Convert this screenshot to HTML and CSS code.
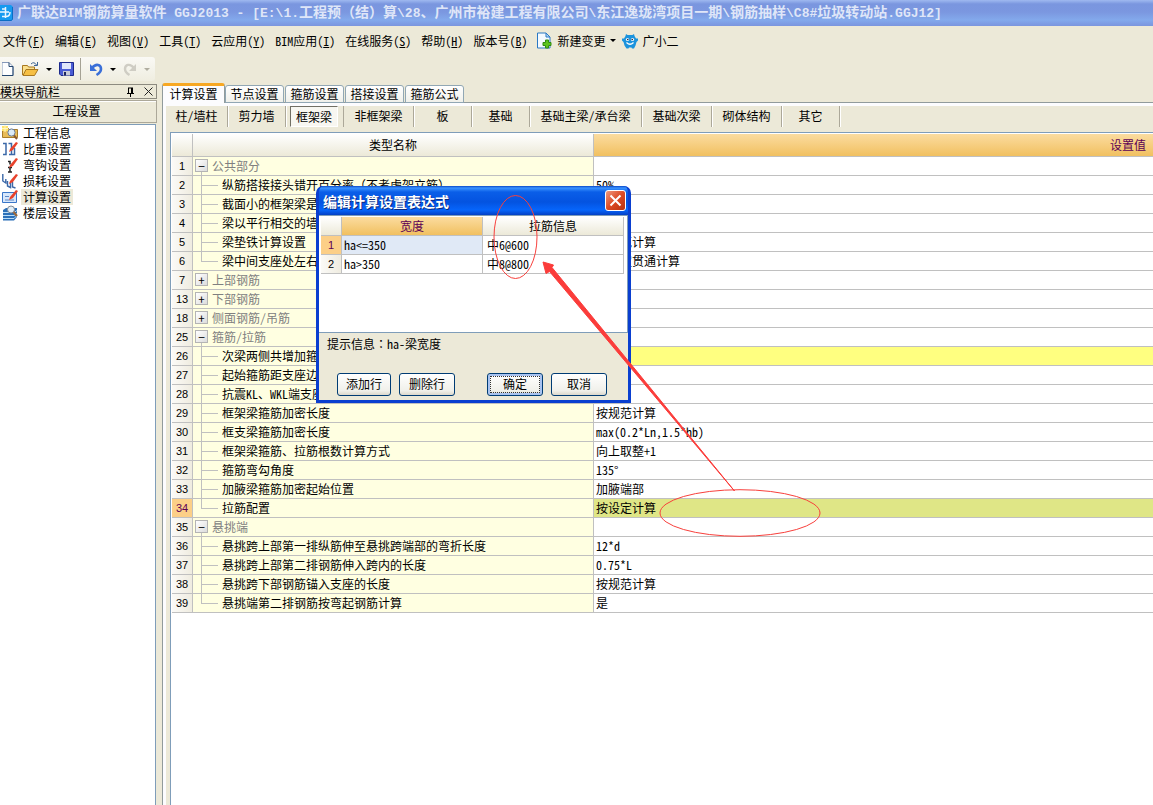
FILE: index.html
```html
<!DOCTYPE html>
<html lang="zh-CN">
<head>
<meta charset="utf-8">
<title>广联达BIM钢筋算量软件 GGJ2013</title>
<link rel="stylesheet" href="styles.css">
</head>
<body>
<div class="app">
  <header class="titlebar">
    <svg class="app-logo" width="14" height="18" viewBox="0 0 14 18"><path d="M0 1h11l2 2v12l-2 2H0z" fill="#169af0"/><path d="M0 16.500h11.500l1-1.500V3" fill="none" stroke="#0a6ec4"/><path d="M0 8h9M5.500 3v11M2 5h3M2 12.500h4c2.500 0 4-1.500 4-4.500" fill="none" stroke="#e8f6ff" stroke-width="1.500"/></svg>
    <h1>广联达<span>BIM</span>钢筋算量软件<span> GGJ2013 - [E:\1.</span>工程预（结）算<span>\28</span>、广州市裕建工程有限公司<span>\</span>东江逸珑湾项目一期<span>\</span>钢筋抽样<span>\C8#</span>垃圾转动站<span>.GGJ12]</span></h1>
  </header>

  <nav class="menubar">
    <button>文件(<u>F</u>)</button>
    <button>编辑(<u>E</u>)</button>
    <button>视图(<u>V</u>)</button>
    <button>工具(<u>T</u>)</button>
    <button>云应用(<u>Y</u>)</button>
    <button>BIM应用(<u>I</u>)</button>
    <button>在线服务(<u>S</u>)</button>
    <button>帮助(<u>H</u>)</button>
    <button>版本号(<u>B</u>)</button>
    <button class="with-icon">
      <svg width="15" height="17" viewBox="0 0 15 17"><path d="M.5 1h8.500l4 4v11H.5z" fill="#f4faff" stroke="#2a78c4"/><path d="M9 1v4h4z" fill="#b8daf6" stroke="#2a78c4"/><path d="M8.500 8h3v2.500H14v3h-2.500V16h-3v-2.500H6v-3h2.500z" fill="#5cc41c" stroke="#2f8a10"/></svg>
      新建变更 <i class="caret"></i>
    </button>
    <button class="with-icon helper">
      <svg width="16" height="16" viewBox="0 0 16 16"><path d="M3.500 3L4 1l1.500 1h5L12 1l.5 2 1.500 2.500h2v2l-1.500 1.500-1 3.500-1.500 3h-2l-.5-1H7l-.5 1h-2l-2-3-1-3.500L0 7.500v-2h2z" fill="#1b93dd"/><circle cx="5.500" cy="6.500" r="1.600" fill="#fff"/><circle cx="10.500" cy="6.500" r="1.600" fill="#fff"/><circle cx="5.800" cy="6.500" r=".8" fill="#124"/><circle cx="10.200" cy="6.500" r=".8" fill="#124"/><path d="M4.500 9.500q3.500 3.500 7 0" fill="none" stroke="#fff" stroke-width="1.200"/></svg>
      广小二
    </button>
  </nav>

  <div class="toolbar">
    <button aria-label="新建"><svg width="12" height="16" viewBox="0 0 12 16"><path d="M0 1.500h7l4 4v9H0z" fill="#fdfeff" stroke="#8598b8"/><path d="M7 1.500v4h4v9H0" fill="none" stroke="#24466f"/></svg></button>
    <button aria-label="打开"><svg width="17" height="16" viewBox="0 0 17 16"><path d="M.5 14V4.500h5l1 1.500h6v3" fill="#fbe08c" stroke="#a87820"/><path d="M1 14.500L4 8.500h12L12.500 14.500z" fill="#f6bf43" stroke="#a87820"/><path d="M9 3q3-3 5.500 1M15.500 1v3.500H12" fill="none" stroke="#3d6493"/></svg></button>
    <i class="caret"></i>
    <button aria-label="保存"><svg width="15" height="16" viewBox="0 0 15 16"><path d="M.5 1.500h14v13H2L.5 13z" fill="#4a5cd4" stroke="#1c2a8c"/><path d="M3 2h9v6H3z" fill="#dfe6fa"/><path d="M4 10h7v4.500H4z" fill="#c8ccd8"/><path d="M5 11h2v3.500H5z" fill="#1c2460"/></svg></button>
    <span class="tool-sep"></span>
    <button aria-label="撤销"><svg width="14" height="15" viewBox="0 0 14 15"><path d="M3 6c4-5 9-3.500 9 1 0 3-2 4.500-4.500 6" fill="none" stroke="#3a6fd8" stroke-width="2.600"/><path d="M1 2v7h7z" fill="#3a6fd8"/></svg></button>
    <i class="caret"></i>
    <button aria-label="重做" disabled><svg width="14" height="15" viewBox="0 0 14 15"><path d="M11 6C7 1 2 2.500 2 7c0 3 2 4.500 4.500 6" fill="none" stroke="#cfcdc4" stroke-width="2.400"/><path d="M13 2v7H6z" fill="#cfcdc4"/></svg></button>
    <i class="caret off"></i>
  </div>

  <div class="workspace">
    <aside class="sidebar">
      <div class="side-head"><span class="side-name">模块导航栏</span>
        <button aria-label="固定"><svg width="9" height="10" viewBox="0 0 9 10"><path d="M2.500 1v5M6 1v5M2 1h5M1 6.500h7M4.500 7v3" fill="none" stroke="#000"/><path d="M5 1h2v5H5z"/></svg></button>
        <button aria-label="关闭"><svg width="9" height="9" viewBox="0 0 9 9"><path d="M.5.5l8 8M8.500.5l-8 8" stroke="#222"/></svg></button>
      </div>
      <button class="side-group">工程设置</button>
      <ul class="side-list">
        <li><a href="#info"><svg width="16" height="16" viewBox="0 0 16 16"><path d="M.5 3.500h6l1 1h8v8H.5z" fill="#e8bc58" stroke="#a87c28"/><path d="M0 1h6v5H0z" fill="#ffe36a"/><path d="M3 0v7M0 3.500h6" stroke="#fff6c0"/><circle cx="9.500" cy="7.500" r="3.600" fill="#dcecf8" stroke="#6a7c94"/><path d="M12 10.500l3 3.500" stroke="#8a5a30" stroke-width="2"/></svg><span>工程信息</span></a></li>
        <li><a href="#weight"><svg width="16" height="16" viewBox="0 0 16 16"><path d="M1 2.500h3v11H1M6.500 2.500h3v11H7M12.500 7v6.500H10" fill="none" stroke="#3b68a8" stroke-width="1.500"/><path d="M8 8l6-7 2 1-5 7-4 2z" fill="#e8422c"/></svg><span>比重设置</span></a></li>
        <li><a href="#hook"><svg width="16" height="16" viewBox="0 0 16 16"><path d="M6 4.500h2v3M6 15h4M8 10v5M6 10.500h4" fill="none" stroke="#222" stroke-width="1.500"/><path d="M8 8l6-7 2 1-5 7-4 2z" fill="#e8422c"/></svg><span>弯钩设置</span></a></li>
        <li><a href="#loss"><svg width="16" height="16" viewBox="0 0 16 16"><path d="M.8 1v7l3 2V6M5.500 8v5l3 1.500V9M10.500 9v5l3 1" fill="none" stroke="#3b68a8" stroke-width="1.400"/><path d="M8 8l6-7 2 1-5 7-4 2z" fill="#e8422c"/></svg><span>损耗设置</span></a></li>
        <li class="current"><a href="#calc"><svg width="16" height="16" viewBox="0 0 16 16"><path d="M.5 3.500h14v10H.5z" fill="#d7e7fb" stroke="#3a76c8"/><path d="M3 7.500h4M3 11h9" stroke="#5a88c8"/><path d="M8 8l6-7 2 1-5 7-4 2z" fill="#e8422c"/></svg><span>计算设置</span></a></li>
        <li><a href="#floor"><svg width="16" height="16" viewBox="0 0 16 16"><path d="M1 5l3-2h11v9l-3 3.500H1z" fill="#2a6fb8"/><path d="M1 7.500h11l3-2M1 10.500h11l3-2M1 13.500h11l3-3" fill="none" stroke="#b8dcf6"/><circle cx="9" cy="4.500" r="3.500" fill="#e2eef6" stroke="#7c8898"/><path d="M11.500 7l3.500 4" stroke="#a06a38" stroke-width="2"/></svg><span>楼层设置</span></a></li>
      </ul>
    </aside>

    <main class="content">
      <div class="tabs">
        <button class="tab active">计算设置</button>
        <button class="tab">节点设置</button>
        <button class="tab">箍筋设置</button>
        <button class="tab">搭接设置</button>
        <button class="tab">箍筋公式</button>
      </div>
      <div class="page">
        <div class="subtabs">
          <button>柱/墙柱</button>
          <button>剪力墙</button>
          <button class="pressed">框架梁</button>
          <button class="wide">非框架梁</button>
          <button>板</button>
          <button>基础</button>
          <button class="widest">基础主梁/承台梁</button>
          <button class="wide">基础次梁</button>
          <button class="wide">砌体结构</button>
          <button>其它</button>
        </div>
        <div class="grid-wrap">
          <table class="grid">
            <colgroup><col class="c-num"><col class="c-name"><col></colgroup>
            <thead><tr><th></th><th>类型名称</th><th class="val-head">设置值</th></tr></thead>
            <tbody>
              <tr class="group open"><th>1</th><td><button>−</button>公共部分</td><td></td></tr>
              <tr><th>2</th><td>纵筋搭接接头错开百分率（不考虑架立筋）</td><td>50%</td></tr>
              <tr><th>3</th><td>截面小的框架梁是</td><td></td></tr>
              <tr><th>4</th><td>梁以平行相交的墙</td><td></td></tr>
              <tr><th>5</th><td>梁垫铁计算设置</td><td>按规范计算</td></tr>
              <tr class="last"><th>6</th><td>梁中间支座处左右</td><td>按设定贯通计算</td></tr>
              <tr class="group"><th>7</th><td><button>+</button>上部钢筋</td><td></td></tr>
              <tr class="group"><th>13</th><td><button>+</button>下部钢筋</td><td></td></tr>
              <tr class="group"><th>18</th><td><button>+</button>侧面钢筋/吊筋</td><td></td></tr>
              <tr class="group open"><th>25</th><td><button>−</button>箍筋/拉筋</td><td></td></tr>
              <tr class="changed"><th>26</th><td>次梁两侧共增加箍筋</td><td></td></tr>
              <tr><th>27</th><td>起始箍筋距支座边</td><td></td></tr>
              <tr><th>28</th><td>抗震KL、WKL端支座</td><td></td></tr>
              <tr><th>29</th><td>框架梁箍筋加密长度</td><td>按规范计算</td></tr>
              <tr><th>30</th><td>框支梁箍筋加密长度</td><td>max(0.2*Ln,1.5*hb)</td></tr>
              <tr><th>31</th><td>框架梁箍筋、拉筋根数计算方式</td><td>向上取整+1</td></tr>
              <tr><th>32</th><td>箍筋弯勾角度</td><td>135°</td></tr>
              <tr><th>33</th><td>加腋梁箍筋加密起始位置</td><td>加腋端部</td></tr>
              <tr class="last selected"><th>34</th><td>拉筋配置</td><td>按设定计算</td></tr>
              <tr class="group open"><th>35</th><td><button>−</button>悬挑端</td><td></td></tr>
              <tr><th>36</th><td>悬挑跨上部第一排纵筋伸至悬挑跨端部的弯折长度</td><td>12*d</td></tr>
              <tr><th>37</th><td>悬挑跨上部第二排钢筋伸入跨内的长度</td><td>0.75*L</td></tr>
              <tr><th>38</th><td>悬挑跨下部钢筋锚入支座的长度</td><td>按规范计算</td></tr>
              <tr class="last"><th>39</th><td>悬挑端第二排钢筋按弯起钢筋计算</td><td>是</td></tr>
            </tbody>
          </table>
        </div>
      </div>
    </main>
  </div>

  <section class="dialog" role="dialog" aria-labelledby="dlg-title">
    <div class="dlg-bar">
      <h2 id="dlg-title">编辑计算设置表达式</h2>
      <button class="dlg-close" aria-label="关闭"><svg width="13" height="13" viewBox="0 0 13 13"><path d="M1.500 1.500l10 10M11.500 1.500l-10 10" stroke="#fff" stroke-width="2"/></svg></button>
    </div>
    <div class="dlg-body">
      <div class="dlg-table">
        <table class="expr">
          <colgroup><col class="c-num"><col><col></colgroup>
          <thead><tr><th></th><th class="hot">宽度</th><th>拉筋信息</th></tr></thead>
          <tbody>
            <tr><th class="hot-row">1</th><td class="focus">ha&lt;=350</td><td>中6@600</td></tr>
            <tr><th>2</th><td>ha&gt;350</td><td>中8@800</td></tr>
          </tbody>
        </table>
      </div>
      <p class="hint">提示信息<span lang="zh-TW">：</span>ha-梁宽度</p>
      <div class="dlg-actions">
        <button class="add">添加行</button>
        <button>删除行</button>
        <button class="default">确定</button>
        <button>取消</button>
      </div>
    </div>
  </section>

  <svg class="marks" width="1153" height="805" viewBox="0 0 1153 805">
    <ellipse cx="515.500" cy="237" rx="21.500" ry="41.500"/>
    <ellipse cx="740" cy="513" rx="80" ry="23.300"/>
    <path class="arrow" d="M543 262l10.500 3-1.500 2.500L734.500 491 549.500 271.500l-3.500 2z"/>
  </svg>
</div>
</body>
</html>
```

FILE: styles.css
```css
* { box-sizing: border-box; }
body {
  margin: 0;
  background: #ece9d8;
  color: #000;
  font: 12px/16px "Noto Sans Mono CJK SC", "Noto Sans CJK SC", sans-serif;
}
button { margin: 0; padding: 0; border: 0; background: none; color: inherit; font: inherit; white-space: nowrap; }
h1, h2, p, ul { margin: 0; padding: 0; }
svg { display: block; flex: none; }
table { border-collapse: separate; border-spacing: 0; table-layout: fixed; width: 100%; }
th { font-weight: normal; }

.app { position: relative; display: flex; flex-direction: column; min-height: 100vh; overflow: hidden; }

/* Window title */
.titlebar {
  display: flex; align-items: center; gap: 3px; height: 26px;
  background: linear-gradient(#9fb9f0 0, #7a96df 4px, #7b97e0 12px, #83a9ec 20px, #7b95de 26px);
  color: #dfe6f8;
}
.titlebar h1 { padding-bottom: 2px; font-size: 14px; line-height: 22px; font-weight: bold; white-space: pre; }
.titlebar span { font: bold 13px/22px "Liberation Mono", monospace; }

/* Menus and tools */
.menubar { display: flex; align-items: center; gap: 10px; height: 30px; padding: 0 0 1px 3px; }
.with-icon { display: flex; align-items: center; gap: 5px; }
.helper { gap: 4px; margin-left: -4px; }
.caret { border: 3px solid transparent; border-top-color: #000; border-bottom: 0; }
.caret.off { border-top-color: #b0ada0; }

.toolbar {
  display: flex; align-items: center; gap: 8px; width: 155px; height: 24px; padding-left: 2px;
  margin: 1px 0 2px;
  background: linear-gradient(#faf9f5, #efede0); border-radius: 0 3px 3px 0;
}
.toolbar .caret { margin: 0 -1px; }
.tool-sep { width: 1px; height: 22px; margin-left: -2px; background: #a5a294; }

.workspace { display: flex; flex: 1; gap: 5px; }

/* Navigation pane */
.sidebar { display: flex; flex-direction: column; width: 157px; padding-top: 1px; flex: none; }
.side-head { display: flex; align-items: center; gap: 9px; height: 15px; padding-right: 3px; border: 1px solid #8d8b80; border-left: 0; }
.side-name { flex: 1; line-height: 13px; }
.side-group { height: 23px; margin: 1px 0; padding: 0 3px 1px 0; border: 1px solid #aca899; border-left: 0; box-shadow: inset 0 1px #fff; text-align: center; }
.side-list { flex: 1; width: 156px; list-style: none; background: #fff; border-top: 1px solid #7f9db9; border-right: 1px solid #7f9db9; }
.side-list a { display: flex; gap: 3px; padding-left: 2px; color: #000; text-decoration: none; }
.side-list span { padding: 0 2px; }
.current span { background: #ece9d8; }

/* Tabs */
.content { display: flex; flex-direction: column; flex: 1; min-width: 0; }
.tabs { display: flex; align-items: flex-end; gap: 1px; height: 20px; box-shadow: inset 0 -1px #919b9c; }
.tab { width: 59px; height: 18px; border: 1px solid #91a7b4; border-radius: 3px 3px 0 0; background: linear-gradient(#fff, #f0f0ea); line-height: 16px; }
.tab.active { width: 63px; height: 20px; margin-right: -1px; padding-bottom: 2px; border-color: #919b9c; border-top: 3px solid #f7a823; border-bottom: 0; background: #fcfcfe; line-height: 15px; }

.page { display: flex; flex-direction: column; flex: 1; padding: 3px 0 0 3px; border-left: 1px solid #919b9c; background: #fcfcfe; }
.subtabs { display: flex; height: 26px; padding-bottom: 5px; background: #ece9d8; }
.subtabs button { width: 58px; flex: none; padding-bottom: 2px; border-right: 1px solid #aca899; box-shadow: 1px 0 #fff; }
.subtabs button:first-child { width: 62px; }
.subtabs .wide { width: 70px; }
.subtabs .widest { width: 112px; }
.subtabs .pressed { width: 48px; margin: 0 5px 0 4px; padding: 0; border: 1px solid #716f64; border-right-color: #fff; border-bottom-color: #fff; box-shadow: none; background: #f8f7f1; }
.subtabs .pressed + button { width: 71px; border-left: 1px solid #aca899; }

/* Settings grid */
.grid-wrap { flex: 1; padding: 1px 0 0 1px; border: 1px solid #7f9db9; border-width: 1px 0 0 1px; background: #fff; box-shadow: -4px 0 #ece9d8; margin-left: 4px; }
.c-num { width: 21px; }
.c-name { width: 401px; }

.grid th, .grid td, .expr th, .expr td {
  height: 19px; padding: 0; border-right: 1px solid #c0c0c0; border-bottom: 1px solid #c0c0c0;
  line-height: 18px; white-space: nowrap; overflow: hidden; text-align: left;
}
.grid th, .expr th { background: linear-gradient(#fff, #ece9d8); text-align: center; }
.grid tbody th, .expr tbody th { background: linear-gradient(90deg, #fbfaf7, #efece0); font: 11px/18px "Liberation Sans", sans-serif; }
.grid thead th { height: 23px; line-height: 22px; }
.grid thead .val-head { padding-right: 7px; border-right: 0; background: linear-gradient(#fbdca0, #f1c060); color: #5c0055; text-align: right; }
.grid tbody td:nth-child(2) {
  padding-left: 29px;
  background:
    linear-gradient(#c0c0c0, #c0c0c0) 8px 0 / 1px 100% no-repeat,
    linear-gradient(#c0c0c0, #c0c0c0) 8px 9px / 17px 1px no-repeat,
    #ffffe1;
}
.grid .last td:nth-child(2) {
  background:
    linear-gradient(#c0c0c0, #c0c0c0) 8px 0 / 1px 9px no-repeat,
    linear-gradient(#c0c0c0, #c0c0c0) 8px 9px / 17px 1px no-repeat,
    #ffffe1;
}
.grid .group td:nth-child(2) { padding-left: 2px; background: #ffffe1; color: #808080; }
.grid .open td:nth-child(2) { background: linear-gradient(#c0c0c0, #c0c0c0) 8px 15px / 1px 3px no-repeat, #ffffe1; }
.group button {
  width: 13px; height: 13px; margin-right: 4px; border: 1px solid #b4b4b4;
  background: linear-gradient(135deg, #fff, #dcdcdc); color: #000; line-height: 11px; vertical-align: baseline;
}
.grid td:nth-child(3) { padding-left: 2px; line-height: 16px; border-right: 0; }
.changed td:nth-child(3) { background: #ffff80; }
.selected td:nth-child(3) { background: #dfe686; }
.grid .selected th { background: #fccf87; color: #5c0055; }

/* Expression dialog */
.dialog {
  position: absolute; left: 316px; top: 186px; width: 315px;
  border: 3px solid #0a3fd0; border-top: 0; border-radius: 7px 7px 0 0;
  background: #0a4fe0; overflow: hidden;
}
.dlg-bar {
  display: flex; align-items: center; justify-content: space-between; height: 29px; padding: 0 2px 0 4px;
  background: linear-gradient(#0a48c8 0, #3a93ff 2px, #0a5ee8 6px, #0453e0 16px, #0665fb 24px, #0440c4 29px);
}
.dlg-bar h2 { color: #fff; font-size: 14px; line-height: 28px; text-shadow: 1px 1px #0a2a80; }
.dlg-close {
  display: flex; align-items: center; justify-content: center; width: 21px; height: 21px;
  border: 1px solid #fff; border-radius: 3px; background: linear-gradient(135deg, #f09a80, #dc4a24 50%, #b83210);
}
.dlg-body { background: #ece9d8; }
.dlg-table { height: 118px; padding: 1px 3px 0 2px; background: #fff; border: 1px solid #7f9db9; border-left: 0; }
.expr thead th { line-height: 16px; }
.expr .hot { background: linear-gradient(#fbdca0, #f1c060); color: #5c0055; }
.expr tbody .hot-row { background: #fccf87; color: #5c0055; }
.expr td { padding-left: 2px; }
.expr td:nth-child(3) { padding-left: 4px; }
.expr .focus { background: #e0e9f6; }
.hint { padding: 3px 8px 0; }
.dlg-actions { display: flex; gap: 8px; padding: 21px 20px 4px 18px; }
.dlg-actions button {
  width: 56px; height: 23px; padding-bottom: 2px; border: 1px solid #003c74; border-radius: 3px;
  background: linear-gradient(#fff, #f0f0ea 80%, #dcd8cc);
}
.dlg-actions .add { width: 54px; }
.dlg-actions .default { margin-left: 24px; box-shadow: inset 0 0 0 2px #a9c3f0; outline: 1px dotted #333; outline-offset: -4px; }

/* Red markup drawn over the window */
.marks { position: absolute; left: 0; top: 0; pointer-events: none; }
.marks ellipse { fill: none; stroke: #f8403c; stroke-width: 1; }
.marks .arrow { fill: #fb3c3a; stroke: #fb3c3a; stroke-width: 1; }
```
